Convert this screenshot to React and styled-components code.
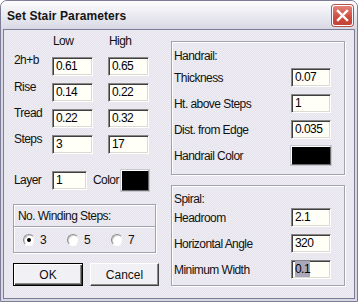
import React from "react";
import styled, { createGlobalStyle } from "styled-components";

const Global = createGlobalStyle`
  html, body { margin: 0; padding: 0; background: #ffffff; }
  body { font-family: "Liberation Sans", Arial, sans-serif; }
  * { box-sizing: border-box; }
`;

const Window = styled.div`
  width: 358px;
  height: 302px;
  display: flex;
  flex-direction: column;
  border: 1px solid #7d7d98;
  border-radius: 7px 7px 0 0;
  background: #d9d9e6;
  overflow: hidden;
`;

const TitleBar = styled.div`
  height: 28px;
  flex: none;
  display: flex;
  align-items: center;
  justify-content: space-between;
  padding: 0 4px 1px 6px;
  background: linear-gradient(#fdfdfe 0%, #eeeef4 40%, #d9d9e5 100%);
`;

const Title = styled.div`
  font: bold 12px "Liberation Sans", Arial, sans-serif;
  color: #141414;
  letter-spacing: 0.1px;
  padding-top: 2px;
`;

const CloseButton = styled.div`
  width: 21px;
  height: 21px;
  border-radius: 3px;
  border: 1px solid #ffffff;
  box-shadow: 0 0 0 1px #b15349;
  background: linear-gradient(#e5857a, #cc4b3d 60%, #c34337);
  display: flex;
  align-items: center;
  justify-content: center;
  margin-top: 1px;
`;

const Client = styled.div`
  flex: 1;
  margin: 0 2px 2px;
  border: 1px solid #7c7c97;
  background-color: #eeecf2;
  background-image: conic-gradient(#e6e4ec 25%, transparent 0 50%, #e6e4ec 0 75%, transparent 0);
  background-size: 2px 2px;
  display: flex;
  gap: 12px;
  padding: 4px 9px 0 9px;
  color: #111111;
  font-size: 12px;
  letter-spacing: -0.55px;
`;

const LeftColumn = styled.div`
  width: 146px;
  display: flex;
  flex-direction: column;
`;

const ParamGrid = styled.div`
  display: grid;
  grid-template-columns: 24px 41px 41px;
  grid-template-rows: 16px repeat(4, 19px);
  column-gap: 15px;
  row-gap: 7px;
`;

const ColHead = styled.div`
  line-height: 14px;
  padding-left: 1px;
`;

const RowLabel = styled.div`
  line-height: 14px;
  margin-top: ${(p) => p.$lift || -3}px;
  padding-left: 1px;
  white-space: nowrap;
`;

const Field = styled.div`
  width: ${(p) => p.$w || 41}px;
  height: 19px;
  border: 1px solid;
  border-color: #878787 #ffffff #ffffff #878787;
  box-shadow: inset 1px 1px 0 #3f3f3f, inset -1px -1px 0 #dcdad2;
  background: #fffef7;
  padding: 0 0 0 3px;
  line-height: 17px;
  font-size: 12px;
  color: #000;
  white-space: nowrap;
`;

const Selected = styled.span`
  background: #a9a8ba;
  padding: 1px 0;
`;

const Swatch = styled.div`
  width: ${(p) => p.$w}px;
  height: ${(p) => p.$h}px;
  background: #000;
  border: 1px solid;
  border-color: #ffffff #6b6b6b #6b6b6b #ffffff;
  box-shadow: 0 0 0 1px #c9c8d2;
`;

const LayerRow = styled.div`
  display: flex;
  align-items: center;
  height: 21px;
  margin-top: 16px;
  padding-left: 1px;
`;

const InlineLabel = styled.div`
  width: ${(p) => p.$w}px;
  line-height: 14px;
  margin-top: -2px;
`;

const Etched = styled.div`
  border: 1px solid #a2a1b0;
  box-shadow: inset 1px 1px 0 #ffffff, 1px 1px 0 #ffffff;
`;

const WindingBox = styled(Etched)`
  width: 143px;
  height: 49px;
  margin-top: 13px;
  display: flex;
  flex-direction: column;
`;

const WindingHeader = styled.div`
  height: 22px;
  flex: none;
  padding: 0 0 0 4px;
  display: flex;
  align-items: center;
  border-bottom: 1px solid #a2a1b0;
  box-shadow: 0 1px 0 #ffffff;
`;

const RadioRow = styled.div`
  flex: 1;
  display: flex;
  align-items: center;
  padding-left: 9px;
  gap: 0;
`;

const RadioItem = styled.div`
  width: 45px;
  display: flex;
  align-items: center;
  gap: 5px;
`;

const RadioCircle = styled.div`
  width: 12px;
  height: 12px;
  border-radius: 50%;
  background: #ffffff;
  border: 1px solid;
  border-color: #8c8c8c #e9e9e9 #ffffff #8c8c8c;
  box-shadow: inset 1px 1px 0 #cfcfcf;
  display: flex;
  align-items: center;
  justify-content: center;
  &::after {
    content: "";
    width: 4px;
    height: 4px;
    border-radius: 50%;
    background: ${(p) => (p.$checked ? "#000" : "transparent")};
  }
`;

const ButtonRow = styled.div`
  display: flex;
  gap: 7px;
  margin-top: 10px;
`;

const Button = styled.div`
  width: ${(p) => p.$w}px;
  height: 23px;
  display: flex;
  align-items: center;
  justify-content: center;
  background: #f1f0f4;
  border: 1px solid;
  border-color: ${(p) => (p.$default ? "#000000" : "#ffffff #404040 #404040 #ffffff")};
  box-shadow: ${(p) =>
    p.$default
      ? "inset 1px 1px 0 #ffffff, inset -1px -1px 0 #404040, inset -2px -2px 0 #8a8a8a"
      : "inset -1px -1px 0 #8a8a8a"};
  font-size: 12px;
  letter-spacing: 0;
  padding-top: 1px;
`;

const RightColumn = styled.div`
  width: 174px;
  display: flex;
  flex-direction: column;
  gap: 10px;
  padding-top: 7px;
`;

const GroupBox = styled(Etched)`
  height: ${(p) => p.$h}px;
  padding: ${(p) => p.$pt}px 13px 0 2px;
  display: flex;
  flex-direction: column;
`;

const GroupTitle = styled.div`
  line-height: 14px;
  margin-bottom: ${(p) => p.$gap}px;
`;

const FieldList = styled.div`
  display: flex;
  flex-direction: column;
  gap: 7px;
`;

const FieldRow = styled.div`
  display: flex;
  align-items: center;
  justify-content: space-between;
  height: ${(p) => p.$h || 19}px;
`;

const FieldLabel = styled.div`
  line-height: 14px;
  white-space: nowrap;
`;

const params = [
  ["2h+b", "0.61", "0.65", -4],
  ["Rise", "0.14", "0.22", -3],
  ["Tread", "0.22", "0.32", -3],
  ["Steps", "3", "17", -3],
];

export default function App() {
  return (
    <>
      <Global />
      <Window>
        <TitleBar>
          <Title>Set Stair Parameters</Title>
          <CloseButton>
            <svg width="13" height="13" viewBox="0 0 13 13">
              <path d="M2 2 L11 11 M11 2 L2 11" stroke="#ffffff" strokeWidth="2.4" strokeLinecap="square" />
            </svg>
          </CloseButton>
        </TitleBar>
        <Client>
          <LeftColumn>
            <ParamGrid>
              <span />
              <ColHead>Low</ColHead>
              <ColHead>High</ColHead>
              {params.map(([label, lo, hi, lift]) => (
                <React.Fragment key={label}>
                  <RowLabel $lift={lift}>{label}</RowLabel>
                  <Field>{lo}</Field>
                  <Field>{hi}</Field>
                </React.Fragment>
              ))}
            </ParamGrid>
            <LayerRow>
              <InlineLabel $w={38}>Layer</InlineLabel>
              <Field $w={35}>1</Field>
              <InlineLabel $w={28} style={{ marginLeft: 6 }}>Color</InlineLabel>
              <Swatch $w={28} $h={21} />
            </LayerRow>
            <WindingBox>
              <WindingHeader>No. Winding Steps:</WindingHeader>
              <RadioRow>
                {["3", "5", "7"].map((v, i) => (
                  <RadioItem key={v}>
                    <RadioCircle $checked={i === 0} />
                    <span>{v}</span>
                  </RadioItem>
                ))}
              </RadioRow>
            </WindingBox>
            <ButtonRow>
              <Button $w={70} $default>OK</Button>
              <Button $w={69}>Cancel</Button>
            </ButtonRow>
          </LeftColumn>
          <RightColumn>
            <GroupBox $h={134} $pt={7}>
              <GroupTitle $gap={5}>Handrail:</GroupTitle>
              <FieldList>
                <FieldRow>
                  <FieldLabel>Thickness</FieldLabel>
                  <Field $w={40}>0.07</Field>
                </FieldRow>
                <FieldRow>
                  <FieldLabel>Ht. above Steps</FieldLabel>
                  <Field $w={40}>1</Field>
                </FieldRow>
                <FieldRow>
                  <FieldLabel>Dist. from Edge</FieldLabel>
                  <Field $w={40}>0.035</Field>
                </FieldRow>
                <FieldRow>
                  <FieldLabel>Handrail Color</FieldLabel>
                  <Swatch $w={40} $h={19} />
                </FieldRow>
              </FieldList>
            </GroupBox>
            <GroupBox $h={101} $pt={6}>
              <GroupTitle $gap={2}>Spiral:</GroupTitle>
              <FieldList>
                <FieldRow>
                  <FieldLabel>Headroom</FieldLabel>
                  <Field $w={40}>2.1</Field>
                </FieldRow>
                <FieldRow>
                  <FieldLabel>Horizontal Angle</FieldLabel>
                  <Field $w={40}>320</Field>
                </FieldRow>
                <FieldRow>
                  <FieldLabel>Minimum Width</FieldLabel>
                  <Field $w={40}><Selected>0.1</Selected></Field>
                </FieldRow>
              </FieldList>
            </GroupBox>
          </RightColumn>
        </Client>
      </Window>
    </>
  );
}
